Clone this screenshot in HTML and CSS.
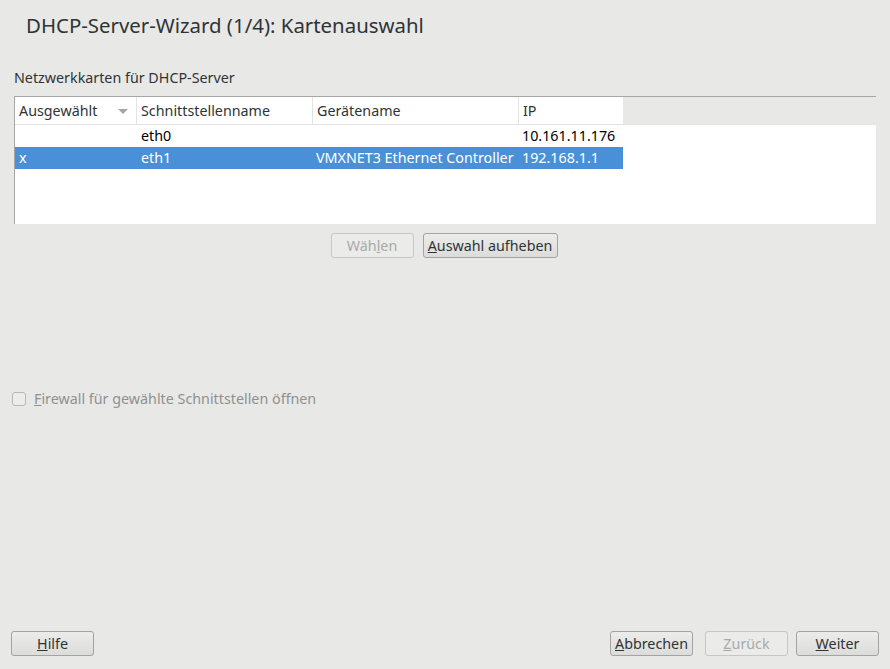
FILE: index.html
```html
<!DOCTYPE html>
<html lang="de">
<head>
<meta charset="utf-8">
<link rel="stylesheet" href="styles.css">
</head>
<body>
<div class="app">
  <h1 class="title">DHCP-Server-Wizard (1/4): Kartenauswahl</h1>
  <div class="content">
    <div class="label">Netzwerkkarten für DHCP-Server</div>
    <div class="table">
      <div class="thead">
        <div class="th c1">Ausgewählt<span class="sort"></span></div>
        <div class="th c2">Schnittstellenname</div>
        <div class="th c3">Gerätename</div>
        <div class="th c4">IP</div>
        <div class="th filler"></div>
      </div>
      <div class="tr">
        <div class="td c1"></div>
        <div class="td c2">eth0</div>
        <div class="td c3"></div>
        <div class="td c4">10.161.11.176</div>
      </div>
      <div class="tr sel">
        <div class="td c1">x</div>
        <div class="td c2">eth1</div>
        <div class="td c3">VMXNET3 Ethernet Controller</div>
        <div class="td c4">192.168.1.1</div>
      </div>
    </div>
    <div class="btnrow">
      <button class="btn disabled">Wäh<u>l</u>en</button>
      <button class="btn"><u>A</u>uswahl aufheben</button>
    </div>
    <label class="check"><span class="box"></span><span><u>F</u>irewall für gewählte Schnittstellen öffnen</span></label>
  </div>
  <div class="footer">
    <button class="btn wide"><u>H</u>ilfe</button>
    <div class="right">
      <button class="btn wide"><u>A</u>bbrechen</button>
      <button class="btn wide disabled"><u>Z</u>urück</button>
      <button class="btn wide"><u>W</u>eiter</button>
    </div>
  </div>
</div>
</body>
</html>
```
FILE: styles.css
```css
* { box-sizing: border-box; }
html, body { margin: 0; padding: 0; }
body {
  background: #e8e8e7;
  font-family: "Noto Sans", "DejaVu Sans", sans-serif;
  color: #2e3436;
  width: 890px;
  height: 669px;
  overflow: hidden;
}
.app {
  display: flex;
  flex-direction: column;
  height: 669px;
}
.title {
  margin: 0;
  padding: 11px 0 0 26px;
  height: 63px;
  font-size: 20.4px;
  font-weight: normal;
  color: #2e3436;
  line-height: 28px;
}
.content {
  flex: 1;
  padding: 0 14px;
}
.label {
  font-size: 14.3px;
  line-height: 20px;
  height: 33px;
  padding-top: 5px;
}
.table {
  width: 862px;
  height: 128px;
  background: #fff;
  border-top: 1px solid #a6a6a6;
  border-left: 1px solid #a6a6a6;
  font-size: 14.3px;
}
.thead, .tr { display: flex; }
.thead { height: 28px; border-bottom: 1px solid #e3e3e3; }
.th {
  background: #fff;
  padding: 3px 4px 0;
  line-height: 22px;
  color: #2e3436;
  border-right: 1px solid #e3e3e3;
  position: relative;
  white-space: nowrap;
}
.th.filler { flex: 1; background: #e8e8e7; border-right: none; }
.c1 { width: 122px; }
.c2 { width: 176px; }
.c3 { width: 206px; }
.c4 { width: 104px; }
.th.c4 { border-right: none; }
.tr { height: 22px; line-height: 22px; color: #000; }
.td { padding: 0 4px; white-space: nowrap; }
.td.c3 { padding-left: 3px; }
.td.c4 { padding-left: 3px; }
.tr.sel { background: #4a90d9; color: #fff; width: 608px; }
.sort {
  position: absolute;
  right: 8px; top: 12px;
  width: 0; height: 0;
  border-left: 5px solid transparent;
  border-right: 5px solid transparent;
  border-top: 5px solid #a5a7a7;
}
.btnrow {
  display: flex;
  justify-content: center;
  gap: 9px;
  margin-top: 9px;
  margin-left: -2px;
}
.btn {
  font-family: inherit;
  font-size: 14.3px;
  color: #2e3436;
  height: 25px;
  padding: 0 4px;
  border: 1px solid #a3a3a1;
  border-radius: 3px;
  background: linear-gradient(#ececeb, #dcdcdb);
  line-height: 22px;
  white-space: nowrap;
}
.btn u { text-decoration-thickness: 1px; }
.btn.disabled {
  color: #a8aaa9;
  background: #ebebea;
  border-color: #c7c7c5;
}
.btnrow .btn.disabled { width: 83px; }
.btnrow .btn:not(.disabled) { width: 135px; }
.check {
  display: flex;
  align-items: center;
  gap: 8px;
  margin-top: 131px;
  margin-left: -2px;
  font-size: 14.3px;
  color: #8f9190;
}
.box {
  width: 14px; height: 14px;
  border: 1px solid #b7b7b5;
  border-radius: 3px;
  background: #ececeb;
}
.footer {
  display: flex;
  justify-content: space-between;
  padding: 0 11px 13px 11px;
}
.right { display: flex; gap: 12px; }
.right .btn:last-child { margin-left: -4px; }
.btn.wide { width: 83px; }
```
